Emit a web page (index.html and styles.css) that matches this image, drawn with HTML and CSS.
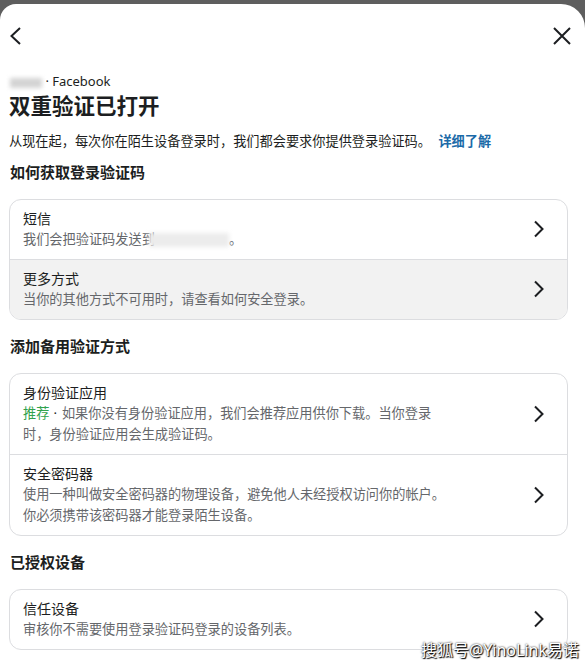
FILE: index.html
```html
<!DOCTYPE html>
<html lang="zh-CN">
<head>
    <meta charset="UTF-8">
    <meta name="viewport" content="width=device-width, initial-scale=1.0">
    <title>双重验证已打开</title>
    <link rel="stylesheet" href="styles.css">
</head>
<body>

<div class="backdrop">
    <div class="sheet">
        <div class="topbar">
            <svg class="icon" width="14" height="20" viewBox="0 0 14 20"><path d="M11 2 L2.5 10 L11 18" fill="none" stroke="#1c1e21" stroke-width="2"/></svg>
            <svg class="icon" width="20" height="20" viewBox="0 0 20 20"><path d="M2 2 L18 18 M18 2 L2 18" fill="none" stroke="#1c1e21" stroke-width="2"/></svg>
        </div>

        <div class="account"><span class="blur-name"></span> · Facebook</div>
        <h1>双重验证已打开</h1>
        <p class="intro">从现在起，每次你在陌生设备登录时，我们都会要求你提供登录验证码。 <a href="#" class="link">详细了解</a></p>

        <h2>如何获取登录验证码</h2>
        <div class="card">
            <div class="row">
                <div class="row-text">
                    <div class="row-title">短信</div>
                    <div class="row-desc">我们会把验证码发送到<span class="blur-phone"></span>。</div>
                </div>
                <svg class="chevron" width="12" height="18" viewBox="0 0 12 18"><path d="M2 1.5 L9.5 9 L2 16.5" fill="none" stroke="#1c1e21" stroke-width="2"/></svg>
            </div>
            <div class="row active">
                <div class="row-text">
                    <div class="row-title">更多方式</div>
                    <div class="row-desc">当你的其他方式不可用时，请查看如何安全登录。</div>
                </div>
                <svg class="chevron" width="12" height="18" viewBox="0 0 12 18"><path d="M2 1.5 L9.5 9 L2 16.5" fill="none" stroke="#1c1e21" stroke-width="2"/></svg>
            </div>
        </div>

        <h2>添加备用验证方式</h2>
        <div class="card">
            <div class="row">
                <div class="row-text">
                    <div class="row-title">身份验证应用</div>
                    <div class="row-desc"><span class="tag">推荐</span><span class="dot">·</span>如果你没有身份验证应用，我们会推荐应用供你下载。当你登录时，身份验证应用会生成验证码。</div>
                </div>
                <svg class="chevron" width="12" height="18" viewBox="0 0 12 18"><path d="M2 1.5 L9.5 9 L2 16.5" fill="none" stroke="#1c1e21" stroke-width="2"/></svg>
            </div>
            <div class="row">
                <div class="row-text">
                    <div class="row-title">安全密码器</div>
                    <div class="row-desc">使用一种叫做安全密码器的物理设备，避免他人未经授权访问你的帐户。你必须携带该密码器才能登录陌生设备。</div>
                </div>
                <svg class="chevron" width="12" height="18" viewBox="0 0 12 18"><path d="M2 1.5 L9.5 9 L2 16.5" fill="none" stroke="#1c1e21" stroke-width="2"/></svg>
            </div>
        </div>

        <h2>已授权设备</h2>
        <div class="card">
            <div class="row">
                <div class="row-text">
                    <div class="row-title">信任设备</div>
                    <div class="row-desc">审核你不需要使用登录验证码登录的设备列表。</div>
                </div>
                <svg class="chevron" width="12" height="18" viewBox="0 0 12 18"><path d="M2 1.5 L9.5 9 L2 16.5" fill="none" stroke="#1c1e21" stroke-width="2"/></svg>
            </div>
        </div>
    </div>
</div>

<div class="watermark">搜狐号@YinoLink易诺</div>

</body>
</html>
```

FILE: styles.css
```css
body {
    margin: 0;
    font-family: "Noto Sans", "Noto Sans CJK SC", sans-serif;
    color: #1c1e21;
    overflow: hidden;
}
.backdrop {
    background-color: #5e5e5e;
    padding-top: 4px;
    height: 656px;
}
.sheet {
    background-color: white;
    border-radius: 16px 24px 0 0;
    padding: 0 17px 0 9px;
    height: 100%;
}
.topbar {
    height: 64px;
    display: flex;
    align-items: center;
    justify-content: space-between;
    margin-right: -4px;
}
.account {
    margin-top: 4px;
    margin-left: 1px;
    font-size: 13px;
    line-height: 18px;
    color: #1c1e21;
}
.blur-name {
    display: inline-block;
    width: 32px;
    height: 10px;
    background-color: #d4d4d4;
    filter: blur(2px);
    vertical-align: middle;
}
h1 {
    margin: 2px 0 0 0;
    font-size: 21.5px;
    line-height: 28px;
    font-weight: 700;
}
.intro {
    margin: 11px 0 0 0;
    font-size: 13.2px;
    line-height: 20px;
    color: #1c1e21;
}
.link {
    color: #1b6aa8;
    font-weight: 700;
    text-decoration: none;
    margin-left: 4px;
}
h2 {
    margin: 15px 0 0 1px;
    font-size: 15px;
    line-height: 22px;
    font-weight: 700;
}
.intro + h2 {
    margin-top: 10px;
}
.card {
    margin-top: 16px;
    border: 1px solid #dcdde0;
    border-radius: 12px;
    overflow: hidden;
}
.row {
    display: flex;
    align-items: center;
    justify-content: space-between;
    padding: 8px 22px 9px 13px;
}
.row + .row {
    border-top: 1px solid #dcdde0;
}
.row.active {
    background-color: #f2f2f2;
}
.row-text {
    max-width: 432px;
}
.row-title {
    font-size: 14px;
    line-height: 21px;
}
.row-desc {
    font-size: 13.2px;
    line-height: 21px;
    color: #65676b;
}
.blur-phone {
    display: inline-block;
    width: 80px;
    height: 14px;
    background-color: #ececec;
    filter: blur(2px);
    vertical-align: middle;
    margin-left: -6px;
}
.tag {
    color: #31a24c;
}
.dot {
    color: #1c1e21;
    margin: 0 5px 0 4px;
}
.chevron {
    flex-shrink: 0;
}
.watermark {
    position: absolute;
    right: 6px;
    bottom: 0;
    font-size: 16px;
    line-height: 20px;
    color: white;
    text-shadow: 0 0 2px #000, 1px 1px 1px #000;
}
```
